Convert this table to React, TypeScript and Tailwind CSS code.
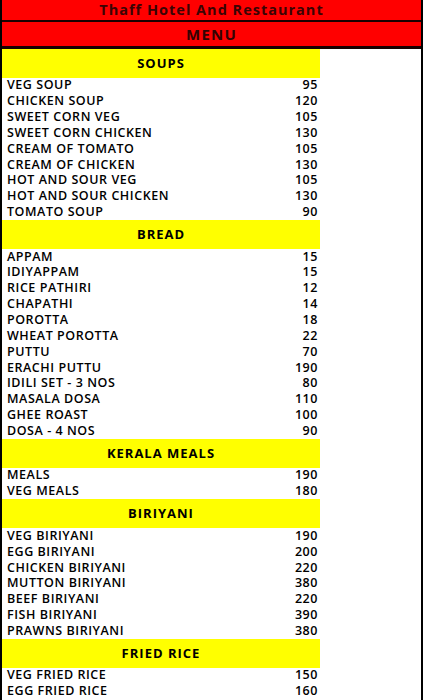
const sections: { title: string; items: [string, number][] }[] = [
  {
    title: "SOUPS",
    items: [
      ["VEG SOUP", 95],
      ["CHICKEN SOUP", 120],
      ["SWEET CORN VEG", 105],
      ["SWEET CORN CHICKEN", 130],
      ["CREAM OF TOMATO", 105],
      ["CREAM OF CHICKEN", 130],
      ["HOT AND SOUR VEG", 105],
      ["HOT AND SOUR CHICKEN", 130],
      ["TOMATO SOUP", 90],
    ],
  },
  {
    title: "BREAD",
    items: [
      ["APPAM", 15],
      ["IDIYAPPAM", 15],
      ["RICE PATHIRI", 12],
      ["CHAPATHI", 14],
      ["POROTTA", 18],
      ["WHEAT POROTTA", 22],
      ["PUTTU", 70],
      ["ERACHI PUTTU", 190],
      ["IDILI SET - 3 NOS", 80],
      ["MASALA DOSA", 110],
      ["GHEE ROAST", 100],
      ["DOSA - 4 NOS", 90],
    ],
  },
  {
    title: "KERALA MEALS",
    items: [
      ["MEALS", 190],
      ["VEG MEALS", 180],
    ],
  },
  {
    title: "BIRIYANI",
    items: [
      ["VEG BIRIYANI", 190],
      ["EGG BIRIYANI", 200],
      ["CHICKEN BIRIYANI", 220],
      ["MUTTON BIRIYANI", 380],
      ["BEEF BIRIYANI", 220],
      ["FISH BIRIYANI", 390],
      ["PRAWNS BIRIYANI", 380],
    ],
  },
  {
    title: "FRIED RICE",
    items: [
      ["VEG FRIED RICE", 150],
      ["EGG FRIED RICE", 160],
    ],
  },
];

export default function App() {
  return (
    <div className="h-[700px] overflow-hidden bg-white font-['Open_Sans',sans-serif]">
      <div className="w-[423px] border-x-2 border-black min-h-[700px]">
        {/* Sheet title */}
        <div className="h-[22px] bg-[#ff0000] border-b-2 border-[#1a0000] flex items-center justify-center text-[14.5px] font-bold tracking-[1px] text-[#3a0404] leading-[18px]">
          Thaff Hotel And Restaurant
        </div>
        <div className="h-[27px] bg-[#ff0000] border-b-[3px] border-[#1a0000] flex items-center justify-center text-[15px] font-bold tracking-[1.2px] text-[#330303] leading-[20px]">
          MENU
        </div>

        {sections.map((s) => (
          <div key={s.title} className="w-[318px]">
            <div className="h-[28.7px] bg-[#ffff00] flex items-center justify-center text-[13px] font-bold tracking-[1px] text-black leading-none">
              {s.title}
            </div>
            {s.items.map(([name, price]) => (
              <div
                key={name}
                className="h-[15.85px] flex items-center justify-between pl-[5px] pr-[2px] text-[12.5px] font-semibold tracking-[0.55px] text-black leading-none"
              >
                <span>{name}</span>
                <span>{price}</span>
              </div>
            ))}
          </div>
        ))}
      </div>
    </div>
  );
}
